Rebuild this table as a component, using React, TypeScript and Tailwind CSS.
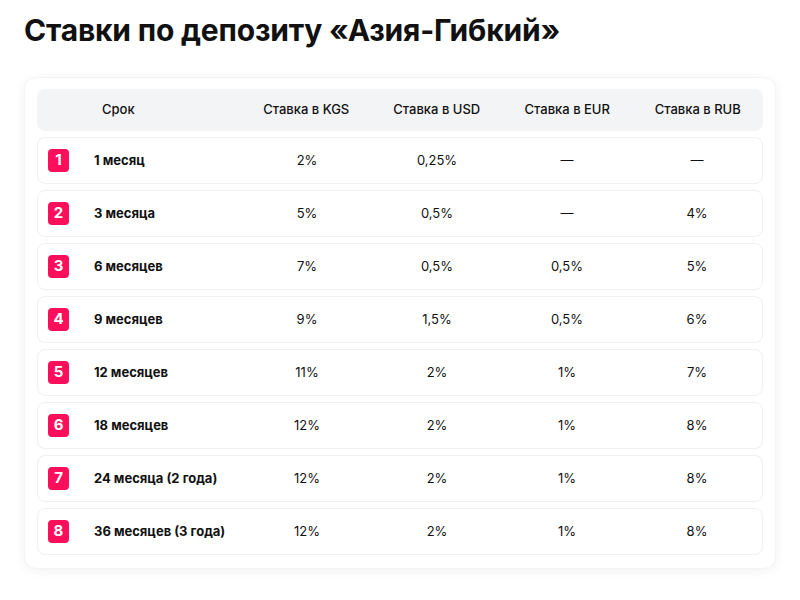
import React from "react";

const rows = [
  ["1 месяц", "2%", "0,25%", "—", "—"],
  ["3 месяца", "5%", "0,5%", "—", "4%"],
  ["6 месяцев", "7%", "0,5%", "0,5%", "5%"],
  ["9 месяцев", "9%", "1,5%", "0,5%", "6%"],
  ["12 месяцев", "11%", "2%", "1%", "7%"],
  ["18 месяцев", "12%", "2%", "1%", "8%"],
  ["24 месяца (2 года)", "12%", "2%", "1%", "8%"],
  ["36 месяцев (3 года)", "12%", "2%", "1%", "8%"],
];

export default function App() {
  return (
    <div
      className="w-[800px] h-[600px] bg-white text-[#111111] overflow-hidden"
      style={{ fontFamily: "Inter, 'Noto Sans', sans-serif" }}
    >
      <h1 className="pl-[24px] pt-[12px] text-[30px] leading-[36px] font-bold tracking-[-0.2px]">
        Ставки по депозиту «Азия-Гибкий»
      </h1>
      <div className="mt-[29px] mx-[24px] w-[752px] rounded-[12px] bg-white p-[12px] pt-[11px] pb-[13px] shadow-[0_2px_12px_rgba(0,0,0,0.06)] border border-[#f3f4f6]">
        <div className="grid grid-cols-[204px_repeat(4,1fr)] items-center h-[42px] rounded-[8px] bg-[#f3f4f6] text-[13px] font-medium">
          <div className="pl-[65px]">Срок</div>
          <div className="text-center">Ставка в KGS</div>
          <div className="text-center">Ставка в USD</div>
          <div className="text-center">Ставка в EUR</div>
          <div className="text-center">Ставка в RUB</div>
        </div>
        <div className="mt-[6px] flex flex-col gap-[6px]">
          {rows.map((r, i) => (
            <div
              key={i}
              className="grid grid-cols-[204px_repeat(4,1fr)] items-center h-[47px] rounded-[8px] border border-[#eef0f3] text-[13px]"
            >
              <div className="flex items-center pl-[10px]">
                <div className="w-[21px] h-[23px] rounded-[4px] bg-[#ff0f5b] text-white text-[15px] font-bold flex items-center justify-center">
                  {i + 1}
                </div>
                <div className="ml-[25px] font-bold">{r[0]}</div>
              </div>
              <div className="text-center">{r[1]}</div>
              <div className="text-center">{r[2]}</div>
              <div className="text-center">{r[3]}</div>
              <div className="text-center">{r[4]}</div>
            </div>
          ))}
        </div>
      </div>
    </div>
  );
}
